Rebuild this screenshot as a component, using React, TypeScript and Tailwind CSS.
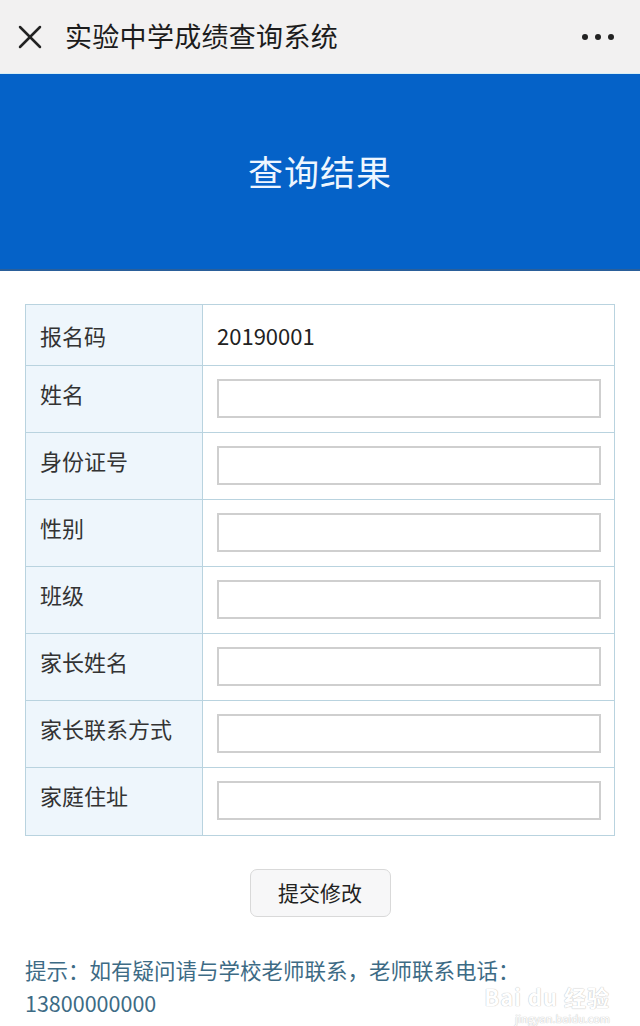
import { X } from 'lucide-react';

const fields = ['姓名', '身份证号', '性别', '班级', '家长姓名', '家长联系方式', '家庭住址'];

const font = { fontFamily: '"Noto Sans CJK SC", "Noto Sans", Roboto, sans-serif' };

export default function App() {
  return (
    <div className="relative w-[640px] min-h-[1026px] bg-white overflow-hidden" style={font}>
      {/* top bar */}
      <div className="h-[74px] bg-[#f2f1f1] flex items-center pl-[10px] pr-[26px] border-b border-[#d7eef5]">
        <X className="w-[40px] h-[40px] text-[#222]" strokeWidth={1.5} />
        <span className="ml-[15px] text-[27px] text-[#1c1c1c] tracking-[0.3px]">实验中学成绩查询系统</span>
        <div className="ml-auto flex gap-[7px]">
          <span className="w-[6px] h-[6px] rounded-full bg-[#222]" />
          <span className="w-[6px] h-[6px] rounded-full bg-[#222]" />
          <span className="w-[6px] h-[6px] rounded-full bg-[#222]" />
        </div>
      </div>

      {/* banner */}
      <div className="h-[197px] bg-[#0562c8] border-b-2 border-[#2a5f9a] flex items-center justify-center">
        <span className="text-[35px] text-[#eef6ff] tracking-[1px]">查询结果</span>
      </div>

      {/* result table */}
      <div className="mx-[25px] mt-[33px] border border-[#b9d3df]">
        <div className="flex h-[61px] border-b border-[#b9d3df]">
          <div className="w-[177px] bg-[#eef6fc] border-r border-[#b9d3df] flex items-center pl-[14px] text-[22px] text-[#333]">报名码</div>
          <div className="flex-1 flex items-center pl-[14px] text-[22px] text-[#222]">20190001</div>
        </div>
        {fields.map((f, i) => (
          <div key={f} className={`flex h-[67px] ${i < fields.length - 1 ? 'border-b border-[#b9d3df]' : ''}`}>
            <div className="w-[177px] bg-[#eef6fc] border-r border-[#b9d3df] pl-[14px] pt-[11px] text-[22px] text-[#333]">{f}</div>
            <div className="flex-1 pl-[14px] pr-[13px] pt-[13px]">
              <div className="h-[39px] border-2 border-[#cfcfcf] bg-white" />
            </div>
          </div>
        ))}
      </div>

      <div className="flex justify-center mt-[33px]">
        <button className="w-[141px] h-[48px] rounded-[7px] border border-[#d9d9d9] bg-[#f7f7f8] text-[21px] text-[#222]">
          提交修改
        </button>
      </div>

      <div className="mx-[25px] mt-[36px] text-[21.5px] leading-[33px] text-[#3d6b85]">
        <p>提示：如有疑问请与学校老师联系，老师联系电话：</p>
        <p>13800000000</p>
      </div>

      {/* site watermark */}
      <div className="absolute right-[30px] bottom-[2px] flex flex-col items-end gap-[6px] text-white select-none" style={{ textShadow: '0 0 1px #c4c4c4, 0 0 1px #c4c4c4' }}>
        <div className="text-[22px] leading-[22px] font-bold tracking-[1px]">Bai du 经验</div>
        <div className="text-[11px] leading-[11px]">jingyan.baidu.com</div>
      </div>
    </div>
  );
}
